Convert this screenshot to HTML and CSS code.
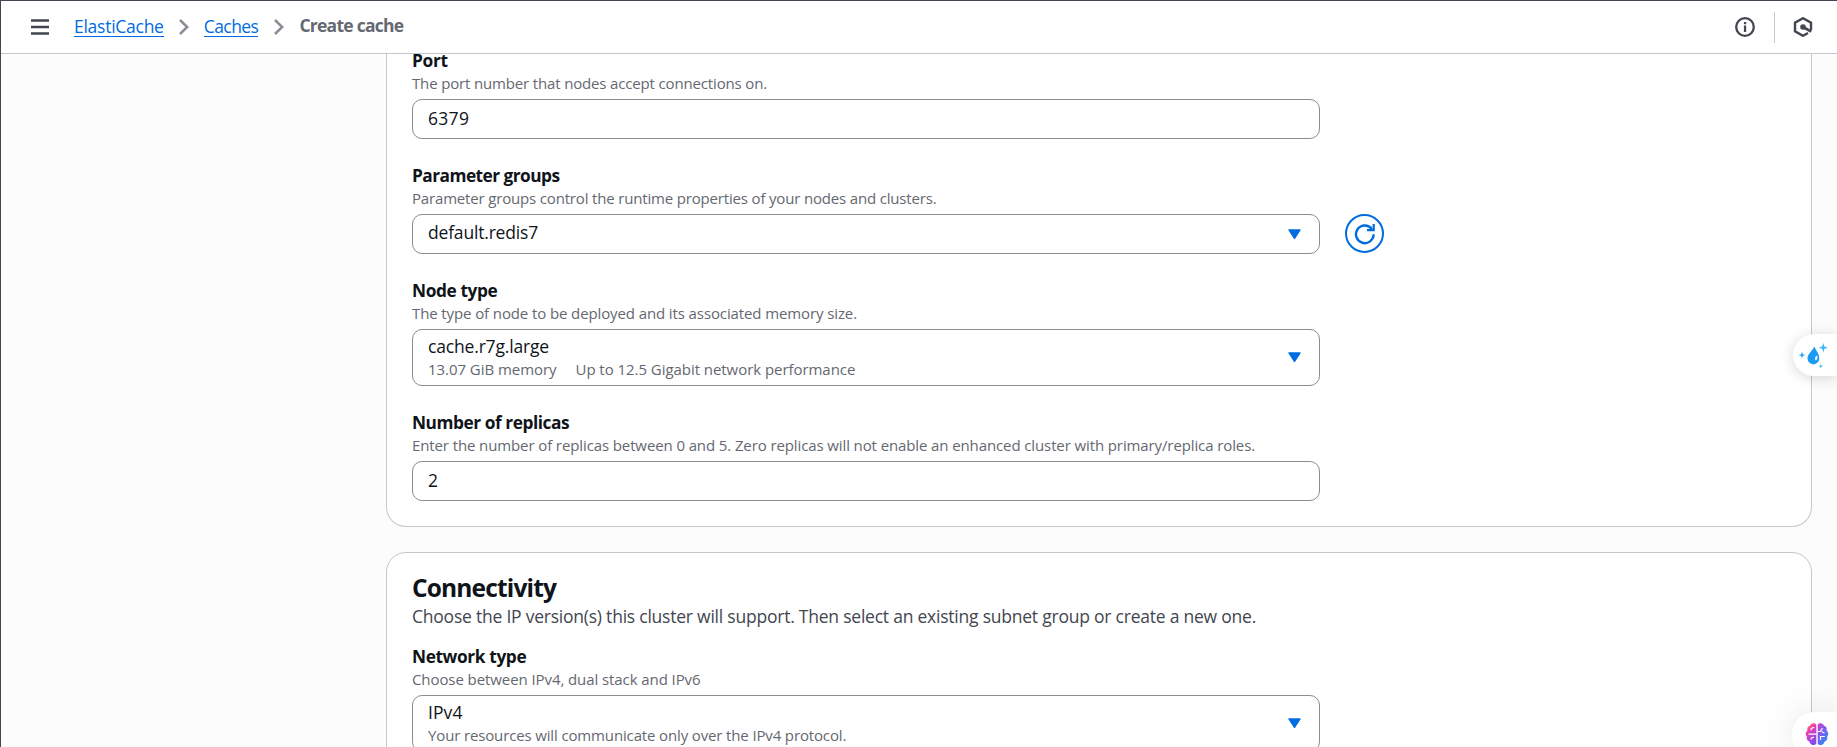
FILE: index.html
```
<!DOCTYPE html>
<html lang="en">
<head>
<meta charset="utf-8">
<title>Create cache</title>
<link rel="stylesheet" href="styles.css">
</head>
<body>
<div class="app">
  <header class="topbar">
    <svg class="menu" width="18" height="16" viewBox="0 0 18 16"><path d="M0 1.5h18M0 8h18M0 14.5h18" fill="none" stroke="#424650" stroke-width="2.3"/></svg>
    <nav class="crumbs">
      <a class="crumb t-elasticache" href="#">ElastiCache</a>
      <svg class="chev" width="10" height="16" viewBox="0 0 10 16"><path d="M1 1l7.2 7L1 15" fill="none" stroke="#8c8c94" stroke-width="2.5"/></svg>
      <a class="crumb t-caches" href="#">Caches</a>
      <svg class="chev" width="10" height="16" viewBox="0 0 10 16"><path d="M1 1l7.2 7L1 15" fill="none" stroke="#8c8c94" stroke-width="2.5"/></svg>
      <span class="current t-current">Create cache</span>
    </nav>
    <div class="tools">
      <svg width="20" height="20" viewBox="0 0 20 20"><circle cx="10" cy="10" r="8.8" fill="none" stroke="#424650" stroke-width="2.3"/><path d="M8.9 5h2.3v2.2H8.9zM8.9 8.6h2.3v6.4H8.9z" fill="#424650"/></svg>
      <span class="divider"></span>
      <svg class="hex" width="20" height="20" viewBox="0 0 20 20"><path d="M18 13V5.700L10 1.200 2 5.700v8.600l8 4.500 5-2.800" fill="none" stroke="#424650" stroke-width="2.400"/><circle cx="10" cy="10" r="2.800" fill="#424650"/><path d="M10 10l8.200 4.600" stroke="#424650" stroke-width="2.600"/></svg>
    </div>
  </header>
  <main class="content">
    <section class="card first">
      <div class="field">
        <div class="label t-port">Port</div>
        <div class="hint t-port-hint">The port number that nodes accept connections on.</div>
        <div class="input"><span class="t-6379">6379</span></div>
      </div>
      <div class="field">
        <div class="label t-param">Parameter groups</div>
        <div class="hint t-param-hint">Parameter groups control the runtime properties of your nodes and clusters.</div>
        <div class="with-action">
          <div class="input select"><span class="t-default">default.redis7</span><svg class="caret" width="13" height="11" viewBox="0 0 13 11"><path d="M1 .9h11L6.5 9.4z" fill="#006ce0" stroke="#006ce0" stroke-width="1.4" stroke-linejoin="round"/></svg></div>
          <button class="refresh" aria-label="Refresh"><svg width="22" height="22" viewBox="0 0 22 22"><path d="M19.600 11.200A8.800 8.800 0 1 1 17.800 6" fill="none" stroke="#006ce0" stroke-width="2.400"/><path d="M19.700 1v6.200H13" fill="none" stroke="#006ce0" stroke-width="2.200"/></svg></button>
        </div>
      </div>
      <div class="field">
        <div class="label t-node">Node type</div>
        <div class="hint t-node-hint">The type of node to be deployed and its associated memory size.</div>
        <div class="input tall">
          <div class="option">
            <div class="t-r7g">cache.r7g.large</div>
            <div class="tags"><span class="t-mem">13.07 GiB memory</span><span class="t-net">Up to 12.5 Gigabit network performance</span></div>
          </div>
          <svg class="caret" width="13" height="11" viewBox="0 0 13 11"><path d="M1 .9h11L6.5 9.4z" fill="#006ce0" stroke="#006ce0" stroke-width="1.4" stroke-linejoin="round"/></svg>
        </div>
      </div>
      <div class="field">
        <div class="label t-rep">Number of replicas</div>
        <div class="hint t-rep-hint">Enter the number of replicas between 0 and 5. Zero replicas will not enable an enhanced cluster with primary/replica roles.</div>
        <div class="input"><span>2</span></div>
      </div>
    </section>
    <section class="card second">
      <h2 class="title">Connectivity</h2>
      <p class="desc">Choose the IP version(s) this cluster will support. Then select an existing subnet group or create a new one.</p>
      <div class="field">
        <div class="label t-type">Network type</div>
        <div class="hint t-type-hint">Choose between IPv4, dual stack and IPv6</div>
        <div class="input tall">
          <div class="option">
            <div class="t-ipv4">IPv4</div>
            <div class="tags"><span class="t-proto">Your resources will communicate only over the IPv4 protocol.</span></div>
          </div>
          <svg class="caret" width="13" height="11" viewBox="0 0 13 11"><path d="M1 .9h11L6.5 9.4z" fill="#006ce0" stroke="#006ce0" stroke-width="1.4" stroke-linejoin="round"/></svg>
        </div>
      </div>
    </section>
  </main>
  <div class="pill drop">
    <svg width="30" height="30" viewBox="0 0 30 30">
      <path d="M16.400 3.200c1 4 4.900 6.800 4.900 12a5.900 6.200 0 0 1-11.800 0c0-4.600 4.900-7 6.900-12z" fill="#1b9cf2"/>
      <ellipse cx="18.300" cy="15" rx="1.200" ry="2.300" fill="#e4f4ff" transform="rotate(15 18.300 15)"/>
      <path d="M25.300 0l1.100 3.600 3.600 1.100-3.600 1.100-1.100 3.600-1.100-3.600-3.600-1.100 3.600-1.100z" fill="#3fb4f7"/>
      <path d="M4 8.600l.9 2.600 2.600.9-2.600.9-.9 2.600-.9-2.600-2.600-.9 2.600-.9z" fill="#36a9f5"/>
      <path d="M22.800 21l.6 1.600 1.600.6-1.600.6-.6 1.600-.6-1.600-1.600-.6 1.600-.6z" fill="#3fb4f7"/>
    </svg>
  </div>
  <div class="pill brain">
    <svg width="24" height="24" viewBox="0 0 24 24">
      <defs><linearGradient id="bl" x1="0" y1="0" x2=".5" y2="1"><stop offset="0" stop-color="#ff8a1c"/><stop offset=".4" stop-color="#ea3fb4"/><stop offset="1" stop-color="#8a4af0"/></linearGradient>
      <linearGradient id="br" x1="0" y1="0" x2=".6" y2="1"><stop offset="0" stop-color="#d53cc8"/><stop offset=".5" stop-color="#7c5cf2"/><stop offset="1" stop-color="#2f8cf5"/></linearGradient></defs>
      <path d="M11.300 2.500C9.500.4 5.800 1 5 3.700 2.600 4.300 1.800 6.600 2.500 8.500.4 9.800.2 13 1.800 14.600c-.5 2.700.6 4.500 2.700 5.100.8 3.300 4.700 4.500 6.800 2.100z" fill="url(#bl)"/>
      <path d="M12.700 2.500C14.500.4 18.200 1 19 3.700c2.400.6 3.200 2.900 2.500 4.800 2.100 1.300 2.300 4.500.7 6.100.5 2.700-.6 4.500-2.700 5.100-.8 3.300-4.700 4.500-6.800 2.100z" fill="url(#br)"/>
      <path d="M6 8.200c0-2 1.400-2.800 3.200-2.700M3.500 12.200h7.800M6 17.500c0-1.500 1.200-2.200 3-2.100M12.700 9.500h2.500l2.300-3.300M15.500 18v-3.500h4.300M16.500 9.500l3 1.500" fill="none" stroke="#fff" stroke-width="1.200"/>
    </svg>
  </div>
</div>
</body>
</html>
```
FILE: styles.css
```
* { box-sizing: border-box; }
body {
  margin: 0;
  background: #fcfcfd;
  color: #0f141a;
  font: 400 17.5px/25px "Open Sans", "Noto Sans", sans-serif;
}
.app {
  position: relative;
  height: 747px;
  overflow: hidden;
  display: flex;
  flex-direction: column;
  border-left: 1px solid #424650;
  border-top: 1px solid #424650;
}
.topbar {
  flex: none;
  height: 53px;
  display: flex;
  align-items: center;
  padding: 0 24px 0 30px;
  background: #fff;
  border-bottom: 1px solid #c6c6cd;
}
.menu { margin-right: 25px; }
.crumbs { display: flex; align-items: center; }
.crumb {
  height: 22px;
  line-height: 22px;
  margin-top: -2px;
  color: #006ce0;
  text-decoration: none;
  border-bottom: 1px solid #006ce0;
}
.chev { margin: 0 15px; }
.crumb + .chev ~ .crumb + .chev { margin-left: 16px; }
.current { font-weight: 660; color: #656871; margin-top: -3px; line-height: 23px; }
.tools { margin-left: auto; display: flex; align-items: center; }
.divider { width: 1px; height: 31px; background: #c6c6cd; margin: 0 18px 0 19px; }
.content {
  flex: 1;
  min-height: 0;
  overflow: hidden;
  padding: 0 25px 0 385px;
}
.card {
  background: #fff;
  border: 1px solid #c6c6cd;
  border-radius: 20px;
  padding: 0 25px;
}
.first {
  height: 479px;
  margin-top: -6px;
  border-top: 0;
  border-radius: 0 0 20px 20px;
}
.second { margin-top: 25px; height: 260px; padding-top: 20px; }
.field { margin-bottom: 24px; display: flow-root; }
.label { font-weight: 660; font-size: 17.3px; }
.hint { font-size: 15px; line-height: 20px; color: #656871; white-space: nowrap; }
.input {
  width: 908px;
  height: 40px;
  margin-top: 6px;
  padding: 0 18px 0 15px;
  display: flex;
  align-items: center;
  justify-content: space-between;
  border: 1px solid #8c8c94;
  border-radius: 10px;
  background: #fff;
}
.input > span { margin-top: -2px; }
.select > span { margin-top: -3px; }
.tall { height: 57px; }
.option { margin-top: -3px; }
.option > div:first-child { line-height: 25px; }
.tags { display: flex; gap: 19px; font-size: 15px; line-height: 20px; color: #656871; white-space: nowrap; }
.with-action { display: flex; align-items: flex-end; gap: 25px; }
.refresh {
  width: 39px;
  height: 39px;
  margin-bottom: 1px;
  padding: 0;
  display: flex;
  align-items: center;
  justify-content: center;
  border: 2px solid #006ce0;
  border-radius: 50%;
  background: #fff;
}
.title { margin: 0; font-size: 24.5px; line-height: 30px; font-weight: 660; letter-spacing: -.84px; }
.desc { margin: 1px 0 15px; color: #424650; letter-spacing: -.226px; line-height: 25px; white-space: nowrap; }

.t-elasticache { letter-spacing: -.26px; }
.t-caches { letter-spacing: -.555px; }
.t-current { letter-spacing: -.75px; }
.t-port { letter-spacing: -.3px; }
.t-param { letter-spacing: -.53px; }
.t-node { letter-spacing: -.4px; }
.t-rep { letter-spacing: -.45px; }
.t-type { letter-spacing: -.38px; }
.t-port-hint { letter-spacing: -.155px; }
.t-param-hint { letter-spacing: -.169px; }
.t-node-hint { letter-spacing: -.109px; }
.t-rep-hint { letter-spacing: -.11px; }
.t-type-hint { letter-spacing: -.083px; }
.t-proto { letter-spacing: -.14px; }
.t-mem { letter-spacing: -.05px; }
.t-net { letter-spacing: -.05px; }
.t-6379 { letter-spacing: .3px; }
.t-default { letter-spacing: -.185px; }
.t-r7g { letter-spacing: -.169px; }
.t-ipv4 { letter-spacing: .1px; }

/* Floating extension buttons docked to the right edge */
.pill {
  position: absolute;
  right: 0;
  background: #fff;
  border-radius: 22px 0 0 22px;
  box-shadow: 0 2px 14px rgba(0, 0, 0, .16);
}
.drop { top: 333px; width: 44px; height: 42px; padding: 9px 0 0 5px; }
.brain { top: 711px; width: 45px; height: 46px; padding: 10px 0 0 13px; box-shadow: 0 0 36px rgba(0, 0, 0, .1); }
```
